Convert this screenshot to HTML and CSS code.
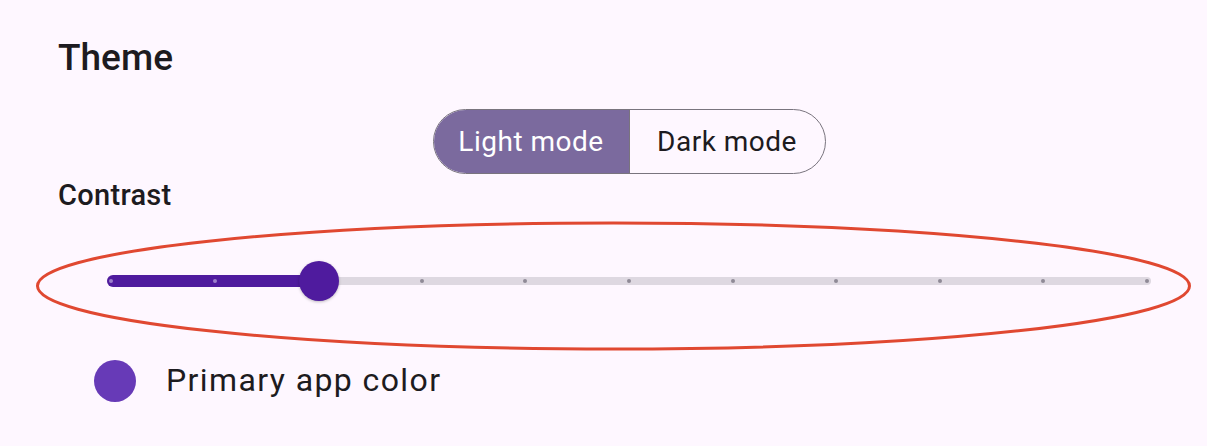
FILE: index.html
```html
<!DOCTYPE html>
<html lang="en">
<head>
<meta charset="utf-8">
<title>Theme settings</title>
<link rel="stylesheet" href="styles.css">
</head>
<body>
<div class="page">
  <h1 class="title">Theme</h1>
  <div class="seg-wrap">
    <div class="seg">
      <div class="seg-btn selected">Light mode</div>
      <div class="seg-btn">Dark mode</div>
    </div>
  </div>
  <div class="label">Contrast</div>
  <div class="slider">
    <div class="track">
      <div class="inactive"></div>
      <div class="active"></div>
      <div class="ticks">
        <span class="tick on"></span><span class="tick on"></span><span class="tick on"></span>
        <span class="tick"></span><span class="tick"></span><span class="tick"></span>
        <span class="tick"></span><span class="tick"></span><span class="tick"></span>
        <span class="tick"></span><span class="tick"></span>
      </div>
      <div class="thumb"></div>
    </div>
  </div>
  <div class="color-row">
    <span class="swatch"></span>
    <span class="color-label">Primary app color</span>
  </div>
</div>
<svg class="annot" width="1207" height="446" viewBox="0 0 1207 446">
  <ellipse cx="613.5" cy="286" rx="576" ry="63" fill="none" stroke="#E04831" stroke-width="3"/>
</svg>
</body>
</html>
```

FILE: styles.css
```css
html, body {
  margin: 0;
  padding: 0;
  background: #FEF7FF;
  font-family: Roboto, "Noto Sans", sans-serif;
  color: #1D1B20;
}

body {
  position: relative;
  width: 1207px;
  height: 446px;
  overflow: hidden;
}

.page {
  padding: 36px 7px 0 58px;
}

.title {
  margin: 0;
  font-size: 37px;
  line-height: 43px;
  font-weight: 500;
}

.seg-wrap {
  display: flex;
  justify-content: center;
  margin-top: 30px;
}

.seg {
  display: flex;
  height: 65px;
  box-sizing: border-box;
  border: 1.5px solid #79747E;
  border-radius: 33px;
  overflow: hidden;
}

.seg-btn {
  width: 195px;
  display: flex;
  align-items: center;
  justify-content: center;
  font-size: 28px;
  font-weight: 400;
  letter-spacing: 0.5px;
  color: #1D1B20;
}

.seg-btn.selected {
  background: #7B6A9E;
  color: #FFFFFF;
  border-right: 1.5px solid #79747E;
}

.label {
  margin-top: 5px;
  font-size: 29px;
  line-height: 33px;
  font-weight: 500;
  letter-spacing: 0.3px;
}

.slider {
  margin-top: 45px;
  height: 48px;
  padding: 0 49px;
  display: flex;
  align-items: center;
}

.track {
  position: relative;
  flex: 1;
  height: 12px;
}

.inactive {
  position: absolute;
  left: 0;
  right: 0;
  top: 2px;
  height: 8px;
  border-radius: 4px;
  background: #DED8E1;
}

.active {
  position: absolute;
  left: 0;
  top: 0;
  width: 212px;
  height: 12px;
  border-radius: 6px;
  background: #4F1B9E;
}

.ticks {
  position: absolute;
  left: 2px;
  right: 2px;
  top: 4px;
  display: flex;
  justify-content: space-between;
}

.tick {
  width: 4px;
  height: 4px;
  border-radius: 50%;
  background: #8F8A96;
}

.tick.on {
  background: #9C7FCB;
}

.thumb {
  position: absolute;
  left: 192px;
  top: -14px;
  width: 40px;
  height: 40px;
  border-radius: 50%;
  background: #4F1B9E;
  box-shadow: 0 1px 3px rgba(0, 0, 0, 0.25);
}

.color-row {
  margin-top: 51px;
  height: 50px;
  padding-left: 36px;
  display: flex;
  align-items: center;
  gap: 30px;
}

.swatch {
  width: 42px;
  height: 42px;
  border-radius: 50%;
  background: #673AB7;
}

.color-label {
  font-size: 32px;
  line-height: 50px;
  letter-spacing: 1.4px;
  margin-top: -2px;
}

.annot {
  position: absolute;
  left: 0;
  top: 0;
  pointer-events: none;
}
```
